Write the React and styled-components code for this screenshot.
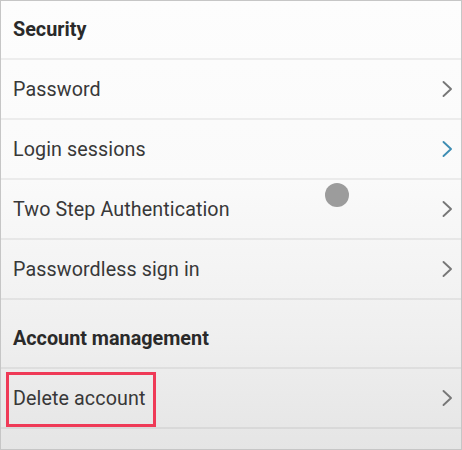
import React from 'react';
import styled, { createGlobalStyle } from 'styled-components';

const GlobalStyle = createGlobalStyle`
  html, body {
    margin: 0;
    padding: 0;
    background: #ffffff;
  }
  body {
    font-family: Roboto, "Liberation Sans", sans-serif;
  }
`;

const Frame = styled.div`
  position: relative;
  width: 462px;
  height: 450px;
  box-sizing: border-box;
  border: 1px solid #c6c6c6;
  overflow: hidden;
  background: linear-gradient(180deg, #fdfdfd 0%, #fafafa 40%, #efefef 75%, #e5e5e5 100%);
`;

const List = styled.div`
  display: flex;
  flex-direction: column;
`;

const Header = styled.div`
  display: flex;
  align-items: center;
  height: ${({ tall }) => (tall ? 69 : 59)}px;
  padding-left: 12px;
  padding-top: ${({ tall }) => (tall ? 10 : 0)}px;
  box-sizing: border-box;
  border-bottom: 2px solid rgba(0, 0, 0, 0.06);
  font-size: 19.8px;
  font-weight: 700;
  color: #2a2a2a;
`;

const Row = styled.div`
  position: relative;
  display: flex;
  align-items: center;
  justify-content: space-between;
  height: 60px;
  padding: 0 8px 0 12px;
  box-sizing: border-box;
  border-bottom: 2px solid rgba(0, 0, 0, 0.06);
  font-size: 19.7px;
  color: #383838;
`;

const Label = styled.span`
  letter-spacing: 0.1px;
`;

const Annotation = styled.span`
  position: absolute;
  left: 5px;
  top: 3px;
  width: 150px;
  height: 55px;
  box-sizing: border-box;
  border: 3px solid #ef3a57;
  pointer-events: none;
`;

const Chevron = styled.svg`
  width: 12px;
  height: 18px;
  flex-shrink: 0;
`;

const TouchDot = styled.span`
  position: absolute;
  left: 324px;
  top: 182px;
  width: 24px;
  height: 24px;
  border-radius: 50%;
  background: #9c9c9c;
`;

const Arrow = ({ active }) => (
  <Chevron viewBox="0 0 12 18" fill="none">
    <polyline
      points="2.5,2 10,9 2.5,16"
      stroke={active ? '#3d8db3' : '#777777'}
      strokeWidth="1.9"
      strokeLinecap="round"
      strokeLinejoin="round"
    />
  </Chevron>
);

const security = [
  { label: 'Password' },
  { label: 'Login sessions', active: true },
  { label: 'Two Step Authentication' },
  { label: 'Passwordless sign in' },
];

const App = () => (
  <>
    <GlobalStyle />
    <Frame>
      <List>
        <Header>Security</Header>
        {security.map((item) => (
          <Row key={item.label}>
            <Label>{item.label}</Label>
            <Arrow active={item.active} />
          </Row>
        ))}
        <Header tall>Account management</Header>
        <Row>
          <Label>Delete account</Label>
          <Arrow />
          <Annotation />
        </Row>
      </List>
      <TouchDot />
    </Frame>
  </>
);

export default App;
